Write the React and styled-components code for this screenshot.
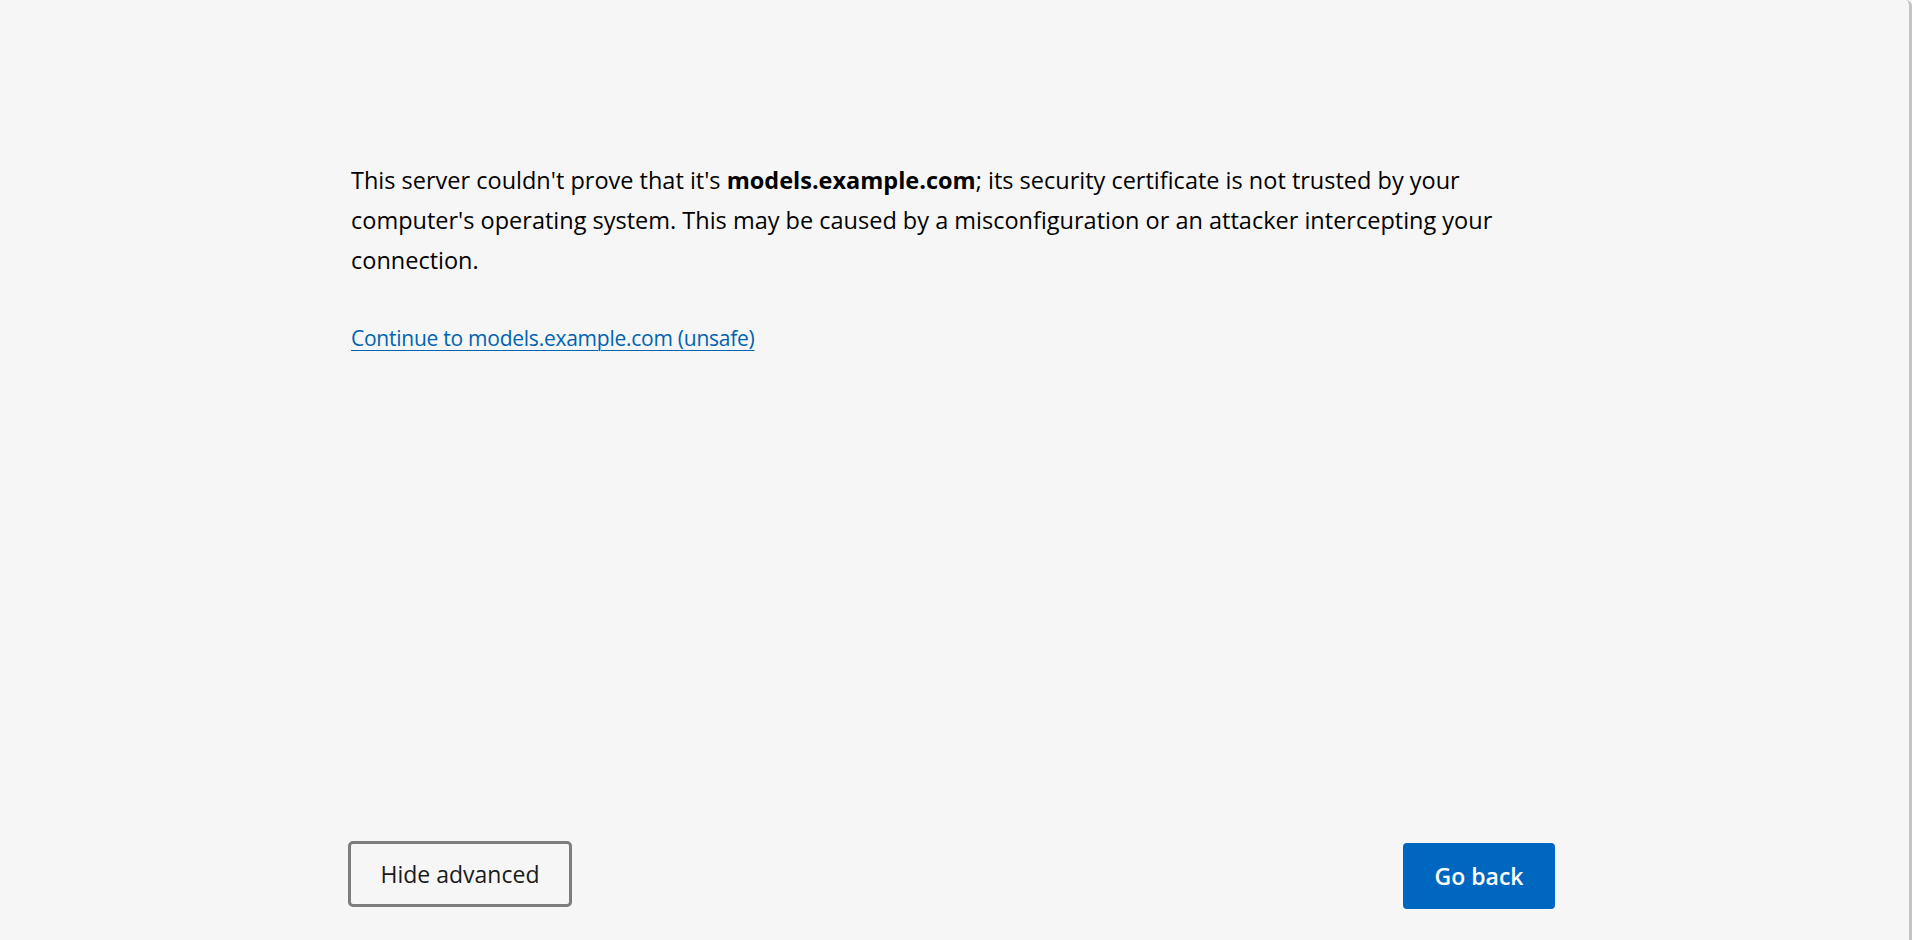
import styled, { createGlobalStyle } from "styled-components";

const GlobalStyle = createGlobalStyle`
  html, body {
    margin: 0;
    padding: 0;
    background: #f6f6f6;
  }
  body {
    font-family: "Open Sans", "Noto Sans", sans-serif;
    color: #000;
  }
`;

const Page = styled.div`
  box-sizing: border-box;
  height: 940px;
  display: flex;
  border-right: 3px solid #c4c4c4;
  border-top-right-radius: 6px;
`;

const Main = styled.main`
  box-sizing: border-box;
  display: flex;
  flex-direction: column;
  width: 1204px;
  margin-left: 351px;
  padding: 160px 0 31px;
`;

const Message = styled.p`
  margin: 0;
  max-width: 1180px;
  font-size: 23.5px;
  line-height: 40px;

  strong {
    font-weight: 700;
  }
`;

const Proceed = styled.a`
  display: inline-block;
  align-self: flex-start;
  margin-top: 43px;
  font-size: 21px;
  line-height: 30px;
  color: #0063b1;
  letter-spacing: -0.25px;
  text-decoration: underline;
  text-underline-offset: 4px;
  text-decoration-thickness: 1px;
  cursor: pointer;
`;

const Actions = styled.div`
  margin-top: auto;
  display: flex;
  justify-content: space-between;
  align-items: flex-end;
`;

const Button = styled.button`
  box-sizing: border-box;
  height: 66px;
  border-radius: ${({ $primary }) => ($primary ? "4px" : "5px")};
  font-family: "Open Sans", "Noto Sans", sans-serif;
  font-size: 23px;
  cursor: pointer;
  padding: 0 20px;
  border: ${({ $primary }) => ($primary ? "none" : "3px solid #7d7d7d")};
  background: ${({ $primary }) => ($primary ? "#0067c0" : "#f6f6f6")};
  color: ${({ $primary }) => ($primary ? "#fff" : "#1b1b1b")};
  font-weight: ${({ $primary }) => ($primary ? 600 : 400)};
  width: ${({ $primary }) => ($primary ? "152px" : "224px")};
  margin: ${({ $primary }) => ($primary ? "0" : "0 0 2px -3px")};
`;

export default function App() {
  return (
    <>
      <GlobalStyle />
      <Page>
        <Main>
          <Message>
            This server couldn't prove that it's <strong>models.example.com</strong>; its security
            certificate is not trusted by your computer's operating system. This may be caused by a
            misconfiguration or an attacker intercepting your connection.
          </Message>
          <Proceed>Continue to models.example.com (unsafe)</Proceed>
          <Actions>
            <Button>Hide advanced</Button>
            <Button $primary>Go back</Button>
          </Actions>
        </Main>
      </Page>
    </>
  );
}
